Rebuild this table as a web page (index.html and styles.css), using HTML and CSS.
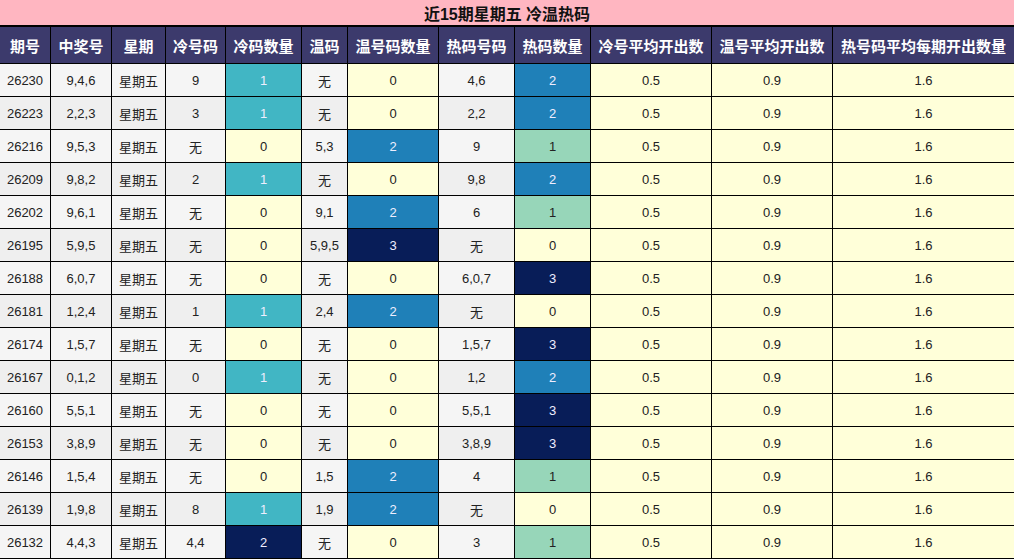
FILE: index.html
```html
<!DOCTYPE html>
<html lang="zh-CN">
<head>
<meta charset="utf-8">
<title>近15期星期五 冷温热码</title>
<link rel="stylesheet" href="styles.css">
</head>
<body>
<table class="tbl">
<colgroup>
<col class="c1"><col class="c2"><col class="c3"><col class="c4"><col class="c5"><col class="c6"><col class="c7"><col class="c8"><col class="c9"><col class="c10"><col class="c11"><col class="c12">
</colgroup>
<thead>
<tr class="title-row"><th colspan="12">近15期星期五 冷温热码</th></tr>
<tr class="head-row">
<th>期号</th><th>中奖号</th><th>星期</th><th>冷号码</th><th>冷码数量</th><th>温码</th><th>温号码数量</th><th>热码号码</th><th>热码数量</th><th>冷号平均开出数</th><th>温号平均开出数</th><th>热号码平均每期开出数量</th>
</tr>
</thead>
<tbody>
<tr><td>26230</td><td>9,4,6</td><td>星期五</td><td>9</td><td class="cold1">1</td><td>无</td><td class="z">0</td><td>4,6</td><td class="h2">2</td><td class="y">0.5</td><td class="y">0.9</td><td class="y">1.6</td></tr>
<tr><td>26223</td><td>2,2,3</td><td>星期五</td><td>3</td><td class="cold1">1</td><td>无</td><td class="z">0</td><td>2,2</td><td class="h2">2</td><td class="y">0.5</td><td class="y">0.9</td><td class="y">1.6</td></tr>
<tr><td>26216</td><td>9,5,3</td><td>星期五</td><td>无</td><td class="z">0</td><td>5,3</td><td class="h2">2</td><td>9</td><td class="h1">1</td><td class="y">0.5</td><td class="y">0.9</td><td class="y">1.6</td></tr>
<tr><td>26209</td><td>9,8,2</td><td>星期五</td><td>2</td><td class="cold1">1</td><td>无</td><td class="z">0</td><td>9,8</td><td class="h2">2</td><td class="y">0.5</td><td class="y">0.9</td><td class="y">1.6</td></tr>
<tr><td>26202</td><td>9,6,1</td><td>星期五</td><td>无</td><td class="z">0</td><td>9,1</td><td class="h2">2</td><td>6</td><td class="h1">1</td><td class="y">0.5</td><td class="y">0.9</td><td class="y">1.6</td></tr>
<tr><td>26195</td><td>5,9,5</td><td>星期五</td><td>无</td><td class="z">0</td><td>5,9,5</td><td class="n3">3</td><td>无</td><td class="z">0</td><td class="y">0.5</td><td class="y">0.9</td><td class="y">1.6</td></tr>
<tr><td>26188</td><td>6,0,7</td><td>星期五</td><td>无</td><td class="z">0</td><td>无</td><td class="z">0</td><td>6,0,7</td><td class="n3">3</td><td class="y">0.5</td><td class="y">0.9</td><td class="y">1.6</td></tr>
<tr><td>26181</td><td>1,2,4</td><td>星期五</td><td>1</td><td class="cold1">1</td><td>2,4</td><td class="h2">2</td><td>无</td><td class="z">0</td><td class="y">0.5</td><td class="y">0.9</td><td class="y">1.6</td></tr>
<tr><td>26174</td><td>1,5,7</td><td>星期五</td><td>无</td><td class="z">0</td><td>无</td><td class="z">0</td><td>1,5,7</td><td class="n3">3</td><td class="y">0.5</td><td class="y">0.9</td><td class="y">1.6</td></tr>
<tr><td>26167</td><td>0,1,2</td><td>星期五</td><td>0</td><td class="cold1">1</td><td>无</td><td class="z">0</td><td>1,2</td><td class="h2">2</td><td class="y">0.5</td><td class="y">0.9</td><td class="y">1.6</td></tr>
<tr><td>26160</td><td>5,5,1</td><td>星期五</td><td>无</td><td class="z">0</td><td>无</td><td class="z">0</td><td>5,5,1</td><td class="n3">3</td><td class="y">0.5</td><td class="y">0.9</td><td class="y">1.6</td></tr>
<tr><td>26153</td><td>3,8,9</td><td>星期五</td><td>无</td><td class="z">0</td><td>无</td><td class="z">0</td><td>3,8,9</td><td class="n3">3</td><td class="y">0.5</td><td class="y">0.9</td><td class="y">1.6</td></tr>
<tr><td>26146</td><td>1,5,4</td><td>星期五</td><td>无</td><td class="z">0</td><td>1,5</td><td class="h2">2</td><td>4</td><td class="h1">1</td><td class="y">0.5</td><td class="y">0.9</td><td class="y">1.6</td></tr>
<tr><td>26139</td><td>1,9,8</td><td>星期五</td><td>8</td><td class="cold1">1</td><td>1,9</td><td class="h2">2</td><td>无</td><td class="z">0</td><td class="y">0.5</td><td class="y">0.9</td><td class="y">1.6</td></tr>
<tr><td>26132</td><td>4,4,3</td><td>星期五</td><td>4,4</td><td class="n3">2</td><td>无</td><td class="z">0</td><td>3</td><td class="h1">1</td><td class="y">0.5</td><td class="y">0.9</td><td class="y">1.6</td></tr>
</tbody>
</table>
</body>
</html>
```
FILE: styles.css
```css
html, body {
  margin: 0;
  padding: 0;
  background: #ffffff;
}
body {
  font-family: "Liberation Sans", Arial, "Noto Sans CJK SC", sans-serif;
  font-size: 13px;
  color: #222;
}
.tbl {
  width: 1015px;
  margin: -1px 0 0 -1px;
  border-collapse: collapse;
  table-layout: fixed;
}
.tbl th, .tbl td {
  border: 1px solid #000;
  text-align: center;
  padding: 0;
  overflow: hidden;
  white-space: nowrap;
}
.c1 { width: 51px; }
.c2 { width: 61px; }
.c3 { width: 54px; }
.c4 { width: 60px; }
.c5 { width: 76px; }
.c6 { width: 46px; }
.c7 { width: 91px; }
.c8 { width: 76px; }
.c9 { width: 76px; }
.c10 { width: 121px; }
.c11 { width: 121px; }
.c12 { width: 182px; }
.title-row th {
  background: #ffb6c1;
  height: 25px;
  font-size: 16px;
  font-weight: bold;
  color: #111;
  border-bottom-width: 2px;
}
.head-row th {
  background: #3c3a6c;
  color: #fff;
  height: 36px;
  font-size: 15px;
  font-weight: bold;
}
.tbl tbody td {
  height: 32px;
  background: #f5f5f5;
}
.tbl tbody tr:nth-child(even) td {
  background: #efefef;
}
.tbl tbody tr td.z,
.tbl tbody tr td.y { background: #ffffd9; }
.tbl tbody tr td.cold1 { background: #41b6c4; color: #eef; }
.tbl tbody tr td.h1 { background: #97d6b9; color: #222; }
.tbl tbody tr td.h2 { background: #1f80b8; color: #eef; }
.tbl tbody tr td.n3 { background: #081d58; color: #eef; }
```
